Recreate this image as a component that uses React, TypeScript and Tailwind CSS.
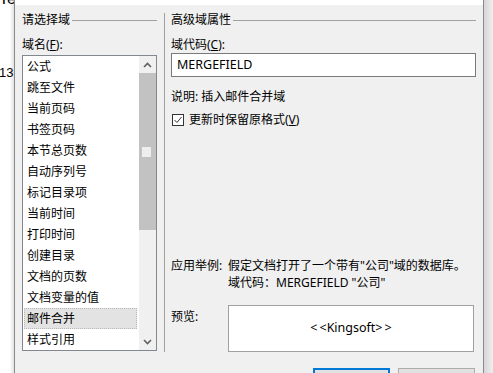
import React from "react";

const items = [
  "公式",
  "跳至文件",
  "当前页码",
  "书签页码",
  "本节总页数",
  "自动序列号",
  "标记目录项",
  "当前时间",
  "打印时间",
  "创建目录",
  "文档的页数",
  "文档变量的值",
  "邮件合并",
  "样式引用",
];

function Chevron({ down }: { down?: boolean }) {
  return (
    <svg width="9" height="6" viewBox="0 0 9 6" className={down ? "rotate-180" : ""}>
      <path d="M1 5 L4.5 1.5 L8 5" fill="none" stroke="#606060" strokeWidth="1.6" />
    </svg>
  );
}

function GroupTitle({ label }: { label: string }) {
  return (
    <div className="flex h-5 shrink-0 items-center">
      <span className="leading-5">{label}</span>
      <div className="ml-[2px] h-px flex-1 bg-[#a0a0a0]" />
    </div>
  );
}

export default function App() {
  const selected = "邮件合并";
  return (
    <div className="flex h-[373px] w-[493px] overflow-hidden bg-white text-[12px] text-black font-['Noto_Sans','Noto_Sans_CJK_SC',sans-serif]">
      {/* page behind the dialog */}
      <div className="w-[14px] shrink-0 bg-linear-to-r from-white from-70% to-[#e2e2e2]">
        <div className="-ml-px -mt-[10px] h-[18px] text-[16px] leading-[18px] font-['Liberation_Sans',sans-serif]">Te</div>
        <div className="-ml-px mt-[57px] text-[13px] leading-4 font-['Liberation_Sans',sans-serif]">13</div>
      </div>

      {/* dialog */}
      <div className="flex h-[373px] w-[470px] shrink-0 flex-col border-x border-[#8a8a8a]">
        <div className="h-[5px] shrink-0 bg-white" />
        <div className="flex min-h-0 flex-1 bg-[#f0f0f0] pl-[7px] pt-[5px]">
          {/* left: field list */}
          <div className="flex w-[135px] shrink-0 flex-col">
            <GroupTitle label="请选择域" />
            <div className="mt-[7px] h-4 shrink-0 leading-4">
              域名(<span className="underline">F</span>):
            </div>
            <div className="mt-[2px] flex h-[296px] shrink-0 border border-[#828790] bg-white">
              <div className="flex-1">
                {items.map((it) =>
                  it === selected ? (
                    <div
                      key={it}
                      className="ml-px mr-[2px] h-[21px] bg-[#e3e3e3] pl-[3px] leading-[21px] outline-1 -outline-offset-1 outline-dotted outline-[#b8b8b8]"
                    >
                      {it}
                    </div>
                  ) : (
                    <div key={it} className="h-[21px] pl-[4px] leading-[21px]">
                      {it}
                    </div>
                  )
                )}
              </div>
              <div className="flex w-[17px] flex-col bg-[#f0f0f0]">
                <div className="flex h-[17px] shrink-0 items-center justify-center">
                  <Chevron />
                </div>
                <div className="h-[157px] shrink-0 bg-[#c2c2c2] pl-[3px] pt-[74px]">
                  <div className="h-[10px] w-[9px] bg-[#eeeeee]" />
                </div>
                <div className="flex-1" />
                <div className="flex h-[17px] shrink-0 items-center justify-center">
                  <Chevron down />
                </div>
              </div>
            </div>
          </div>

          {/* separator */}
          <div className="ml-[7px] mt-[3px] h-[339px] w-px shrink-0 bg-[#a0a0a0]" />

          {/* right: advanced properties */}
          <div className="ml-[6px] flex w-[305px] shrink-0 flex-col">
            <GroupTitle label="高级域属性" />
            <div className="mt-[7px] h-4 shrink-0 leading-4">
              域代码(<span className="underline">C</span>):
            </div>
            <div className="flex h-[24px] shrink-0 items-center border border-[#7a7a7a] bg-white pl-[5px] text-[12.5px]">
              MERGEFIELD
            </div>
            <div className="mt-[12px] h-4 shrink-0 leading-4">说明: 插入邮件合并域</div>
            <div className="mt-[7px] flex h-4 shrink-0 items-center">
              <div className="ml-px flex h-[12px] w-[12px] items-center justify-center border border-[#333333] bg-white">
                <svg width="10" height="10" viewBox="0 0 10 10">
                  <path d="M1.5 5 L4 7.5 L8.5 2" fill="none" stroke="#333333" strokeWidth="1" />
                </svg>
              </div>
              <span className="ml-[5px] leading-4">
                更新时保留原格式(<span className="underline">V</span>)
              </span>
            </div>

            <div className="mt-[129px] grid shrink-0 grid-cols-[57px_1fr] leading-[17px]">
              <div>应用举例:</div>
              <div>假定文档打开了一个带有"公司"域的数据库。</div>
              <div />
              <div>域代码：MERGEFIELD "公司"</div>
            </div>

            <div className="mt-[14px] flex shrink-0">
              <div className="w-[57px] pt-[4px] leading-4">预览:</div>
              <div className="flex h-[47px] w-[246px] items-center justify-center border border-[#a0a0a0] bg-white text-[12.5px]">
                {"<\u2009<Kingsoft>\u2009>"}
              </div>
            </div>

            <div className="mr-px mt-[16px] flex shrink-0 justify-end gap-[8px]">
              <div className="h-[23px] w-[77px] shrink-0 border-2 border-[#0078d7] bg-[#e1e1e1]" />
              <div className="h-[23px] w-[77px] shrink-0 border border-[#adadad] bg-[#e1e1e1]" />
            </div>
          </div>
        </div>
      </div>

      {/* shadow at right */}
      <div className="flex-1 bg-linear-to-r from-[#d6d6d6] to-[#efefef]" />
    </div>
  );
}
